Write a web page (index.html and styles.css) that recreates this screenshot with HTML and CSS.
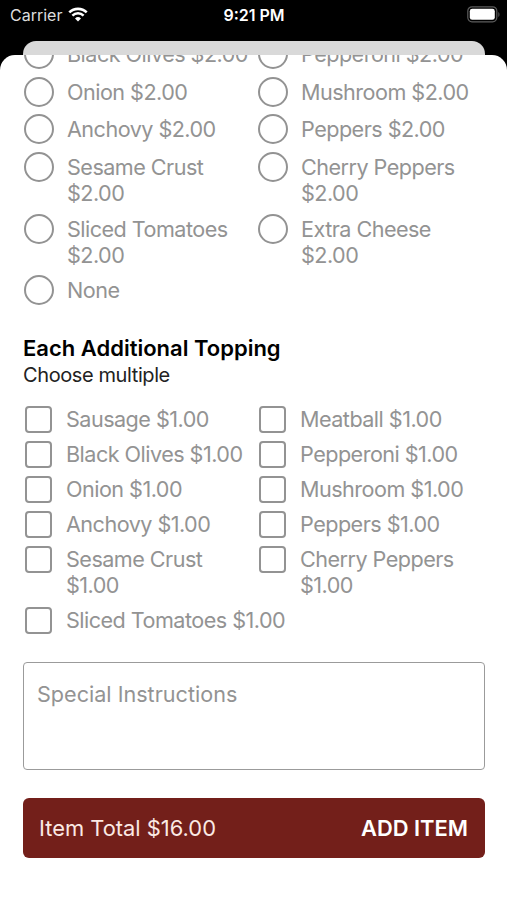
FILE: index.html
```html
<!DOCTYPE html>
<html lang="en">
<head>
	<meta charset="UTF-8">
	<title>Add Item</title>
	<link rel="stylesheet" href="styles.css">
</head>
<body>

	<div class="status_bar">
		<div class="carrier">
			<span>Carrier</span>
			<svg class="wifi" viewBox="0 0 20 15" width="20" height="15">
				<path d="M1.3 5.4a12.4 12.4 0 0 1 17.4 0" fill="none" stroke="#fff" stroke-width="2.6"/>
				<path d="M4.4 8.6a8 8 0 0 1 11.2 0" fill="none" stroke="#fff" stroke-width="2.5"/>
				<path d="M10 14.4l-3-3a4.3 4.3 0 0 1 6 0z" fill="#fff"/>
			</svg>
		</div>
		<div class="clock">9:21 PM</div>
		<svg class="battery" viewBox="0 0 33 17" width="33" height="17">
			<rect x=".8" y=".8" width="29" height="15" rx="4.2" fill="none" stroke="#5c5c5c" stroke-width="1.2"/>
			<rect x="2.8" y="2.8" width="25" height="11" rx="2.4" fill="#fff"/>
			<path d="M31.4 6v5c1.4-.7 1.4-4.3 0-5z" fill="#5c5c5c"/>
		</svg>
	</div>

	<div class="back_sheet"></div>

	<div class="sheet">

		<div class="options radios">
			<label class="option"><span class="circle"></span><span class="name">Black Olives $2.00</span></label>
			<label class="option"><span class="circle"></span><span class="name">Pepperoni $2.00</span></label>
			<label class="option"><span class="circle"></span><span class="name">Onion $2.00</span></label>
			<label class="option"><span class="circle"></span><span class="name">Mushroom $2.00</span></label>
			<label class="option"><span class="circle"></span><span class="name">Anchovy $2.00</span></label>
			<label class="option"><span class="circle"></span><span class="name">Peppers $2.00</span></label>
			<label class="option"><span class="circle"></span><span class="name">Sesame Crust<br>$2.00</span></label>
			<label class="option"><span class="circle"></span><span class="name">Cherry Peppers<br>$2.00</span></label>
			<label class="option"><span class="circle"></span><span class="name">Sliced Tomatoes<br>$2.00</span></label>
			<label class="option"><span class="circle"></span><span class="name">Extra Cheese<br>$2.00</span></label>
			<label class="option"><span class="circle"></span><span class="name">None</span></label>
		</div>

		<h2 class="title">Each Additional Topping</h2>
		<p class="subtitle">Choose multiple</p>

		<div class="options checks">
			<label class="option"><span class="box"></span><span class="name">Sausage $1.00</span></label>
			<label class="option"><span class="box"></span><span class="name">Meatball $1.00</span></label>
			<label class="option"><span class="box"></span><span class="name">Black Olives $1.00</span></label>
			<label class="option"><span class="box"></span><span class="name">Pepperoni $1.00</span></label>
			<label class="option"><span class="box"></span><span class="name">Onion $1.00</span></label>
			<label class="option"><span class="box"></span><span class="name">Mushroom $1.00</span></label>
			<label class="option"><span class="box"></span><span class="name">Anchovy $1.00</span></label>
			<label class="option"><span class="box"></span><span class="name">Peppers $1.00</span></label>
			<label class="option"><span class="box"></span><span class="name">Sesame Crust<br>$1.00</span></label>
			<label class="option"><span class="box"></span><span class="name">Cherry Peppers<br>$1.00</span></label>
			<label class="option"><span class="box"></span><span class="name">Sliced Tomatoes $1.00</span></label>
		</div>

		<textarea class="notes" placeholder="Special Instructions"></textarea>

		<button type="button" class="add_button">
			<span class="total">Item Total $16.00</span>
			<span class="add">ADD ITEM</span>
		</button>

	</div>

</body>
</html>
```

FILE: styles.css
```css
*{
	box-sizing: border-box;
}

body{
	margin: 0;
	height: 900px;
	overflow: hidden;
	display: flex;
	flex-direction: column;
	background: #000;
	font-family: Inter, "Liberation Sans", sans-serif;
	font-size: 21.6px;
	line-height: 26.2px;
}

.status_bar{
	flex: none;
	display: grid;
	grid-template-columns: 1fr auto 1fr;
	align-items: center;
	height: 41px;
	padding: 0 8px 11px 10px;
	color: #fff;
	font-size: 16px;
	line-height: 20px;
}

.carrier{
	display: flex;
	align-items: center;
	gap: 6px;
	color: #ddd;
}

.wifi{
	margin-top: -1px;
}

.clock{
	margin-right: 1px;
	font-weight: 600;
}

.battery{
	justify-self: end;
	margin: -2px -1px 0 0;
}

.back_sheet{
	flex: none;
	height: 30px;
	margin: 0 22px 0 23px;
	border-radius: 13px 13px 0 0;
	background: #d9d9d9;
}

.sheet{
	flex: 1;
	position: relative;
	margin-top: -16.5px;
	padding: 0 22px 0 23px;
	overflow: hidden;
	border-radius: 15px 15px 0 0;
	background: #fff;
}

.options{
	display: grid;
	grid-template-columns: 234px 1fr;
	color: #939393;
	letter-spacing: -.53px;
}

/* the list is scrolled, its first row goes under the edge of the sheet */
.radios{
	margin-top: -15.4px;
	padding-left: 1px;
	row-gap: 7.5px;
}

.checks{
	margin-top: 18px;
	padding-left: 2px;
	row-gap: 8px;
}

.option{
	display: flex;
	align-items: flex-start;
	white-space: nowrap;
}

.circle{
	flex: none;
	width: 30px;
	height: 30px;
	margin-right: 13px;
	border: 2px solid #939393;
	border-radius: 50%;
}

.box{
	flex: none;
	width: 27px;
	height: 27px;
	margin-right: 14px;
	border: 2px solid #939393;
	border-radius: 4px;
}

.radios .name{
	padding-top: 2px;
}

.checks .name{
	padding-top: .4px;
}

.title{
	margin: 29.2px 0 0;
	font-size: 22px;
	font-weight: 600;
	line-height: 27px;
}

.subtitle{
	margin: 0;
	font-size: 20px;
	letter-spacing: -.4px;
	color: #222;
}

.notes{
	display: block;
	width: 100%;
	height: 108px;
	margin-top: 28px;
	padding: 18px 13px;
	border: 1px solid #9b9b9b;
	border-radius: 4px;
	resize: none;
	font: inherit;
}

.notes::placeholder{
	color: #939393;
}

.add_button{
	display: flex;
	justify-content: space-between;
	align-items: center;
	width: 100%;
	height: 60px;
	margin-top: 28px;
	padding: 0 17px 0 16px;
	border: 0;
	border-radius: 6px;
	background: #731f1a;
	color: #fff;
	font: inherit;
	font-size: 21.9px;
}

.total{
	color: #fbe9e4;
}

.add{
	font-weight: 600;
}
```
